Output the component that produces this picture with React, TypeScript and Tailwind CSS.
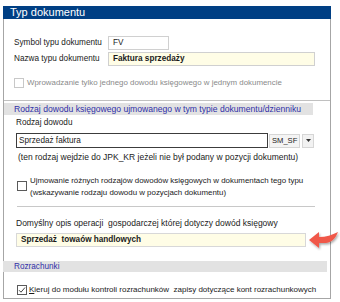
import React from 'react';

function Check({ checked, disabled }: { checked?: boolean; disabled?: boolean }) {
  return (
    <span
      className={`flex h-[10px] w-[10px] shrink-0 items-center justify-center border bg-white ${
        disabled ? 'border-[#c8c8c8]' : 'border-[#5a5a5a]'
      }`}
    >
      {checked && (
        <svg width="8" height="8" viewBox="0 0 8 8">
          <path d="M1 4.2 L3 6.2 L7 1.5" fill="none" stroke="#444" strokeWidth="1" />
        </svg>
      )}
    </span>
  );
}

export default function App() {
  return (
    <div className="h-[302px] w-[340px] overflow-hidden bg-white pt-[6px] pl-[3px] text-[8.2px] leading-[12px] whitespace-nowrap text-[#1a1a1a] [font-family:'Liberation_Sans',Arial,sans-serif]">
      <div className="flex h-[293px] w-[328px] flex-col border-x border-b border-[#a6a6a6]">
        <div className="-mx-px h-[13px] bg-[#003f84] pl-[7px] text-[11px] leading-[13px] text-white">
          Typ dokumentu
        </div>

        <div className="mt-[17px] flex flex-col gap-[2px] pl-[10px]">
          <div className="flex h-[14px] items-center">
            <span className="w-[94px]">Symbol typu dokumentu</span>
            <div className="flex h-[14px] w-[61px] items-center border border-[#d0d0d0] bg-white pl-[4px]">FV</div>
          </div>
          <div className="flex h-[14px] items-center">
            <span className="w-[94px]">Nazwa typu dokumentu</span>
            <div className="flex h-[14px] w-[207px] items-center border border-[#d0d0d0] bg-[#fffde6] pl-[4px] font-bold">
              Faktura sprzedaży
            </div>
          </div>
        </div>

        <div className="mt-[11px] flex items-center gap-[3px] pl-[10px] text-[7.9px] text-[#8a8a8a]">
          <Check disabled />
          <span>Wprowadzanie tylko jednego dowodu księgowego w jednym dokumencie</span>
        </div>

        <div className="mt-[11px] border-t border-[#c0c0c0]" />
        <div className="mt-[2px] mr-[17px] h-[12px] bg-[#e2e2e2] pl-[10px] text-[8.6px] leading-[12px] text-[#3030a8]">
          Rodzaj dowodu księgowego ujmowanego w tym typie dokumentu/dzienniku
        </div>

        <div className="mt-[1px] pl-[12px] leading-[14px]">Rodzaj dowodu</div>
        <div className="mt-[3px] flex items-center pl-[12px]">
          <div className="flex h-[15px] w-[252px] items-center border border-[#3c3c3c] bg-white pl-[2px]">
            Sprzedaż faktura
          </div>
          <div className="ml-px flex h-[14px] w-[31px] items-center border border-[#d6d6d6] bg-[#f4f4f4] pl-[2px] text-[7.6px]">
            SM_SF
          </div>
          <div className="ml-[2px] flex h-[14px] w-[12px] items-center justify-center border border-[#d6d6d6] bg-[#f2f2f2]">
            <svg width="5" height="3" viewBox="0 0 5 3">
              <path d="M0 0 H5 L2.5 3 Z" fill="#333" />
            </svg>
          </div>
        </div>
        <div className="mt-[3px] pl-[14px] text-[8.5px]">
          (ten rodzaj wejdzie do JPK_KR jeżeli nie był podany w pozycji dokumentu)
        </div>

        <div className="mt-[12px] flex items-start gap-[3px] pl-[13px] text-[7.9px]">
          <span className="mt-[6px]">
            <Check />
          </span>
          <span>
            Ujmowanie różnych rodzajów dowodów księgowych w dokumentach tego typu
            <br />
            (wskazywanie rodzaju dowodu w pozycjach dokumentu)
          </span>
        </div>

        <div className="mt-[7px] mr-[15px] ml-[13px] border-t border-[#c8c8c8]" />

        <div className="mt-[10px] pl-[12px] text-[8.5px]">
          Domyślny opis operacji&nbsp; gospodarczej której dotyczy dowód księgowy
        </div>
        <div className="relative mt-[4px] pl-[12px]">
          <div className="flex h-[14px] w-[290px] items-center border border-[#d8d8d8] bg-[#fffde6] pl-[4px] font-bold">
            Sprzedaż&nbsp; towaów handlowych
          </div>
          <svg
            className="absolute top-[-4px] left-[303px]"
            width="34"
            height="22"
            viewBox="0 0 34 22"
          >
            <defs>
              <filter id="sh" x="-20%" y="-20%" width="150%" height="160%">
                <feDropShadow dx="1" dy="1.5" stdDeviation="1" floodColor="#000" floodOpacity="0.35" />
              </filter>
            </defs>
            <path
              d="M2 11 L12 3 L12 8 C19 8 25 6 31 3 C29 8 26 13 19 14 L12 14 L12 19 Z"
              fill="#f0584a"
              filter="url(#sh)"
            />
          </svg>
        </div>

        <div className="mt-[14px] mr-[3px] -ml-px h-[11px] bg-[#e2e2e2] pl-[11px] leading-[11px] text-[#3030a8]">
          Rozrachunki
        </div>

        <div className="mt-[12px] flex items-center gap-[2px] pl-[13px] text-[8px]">
          <Check checked />
          <span>
            <span className="underline">K</span>ieruj do modułu kontroli rozrachunków&nbsp; zapisy dotyczące kont rozrachunkowych
          </span>
        </div>
      </div>
    </div>
  );
}
